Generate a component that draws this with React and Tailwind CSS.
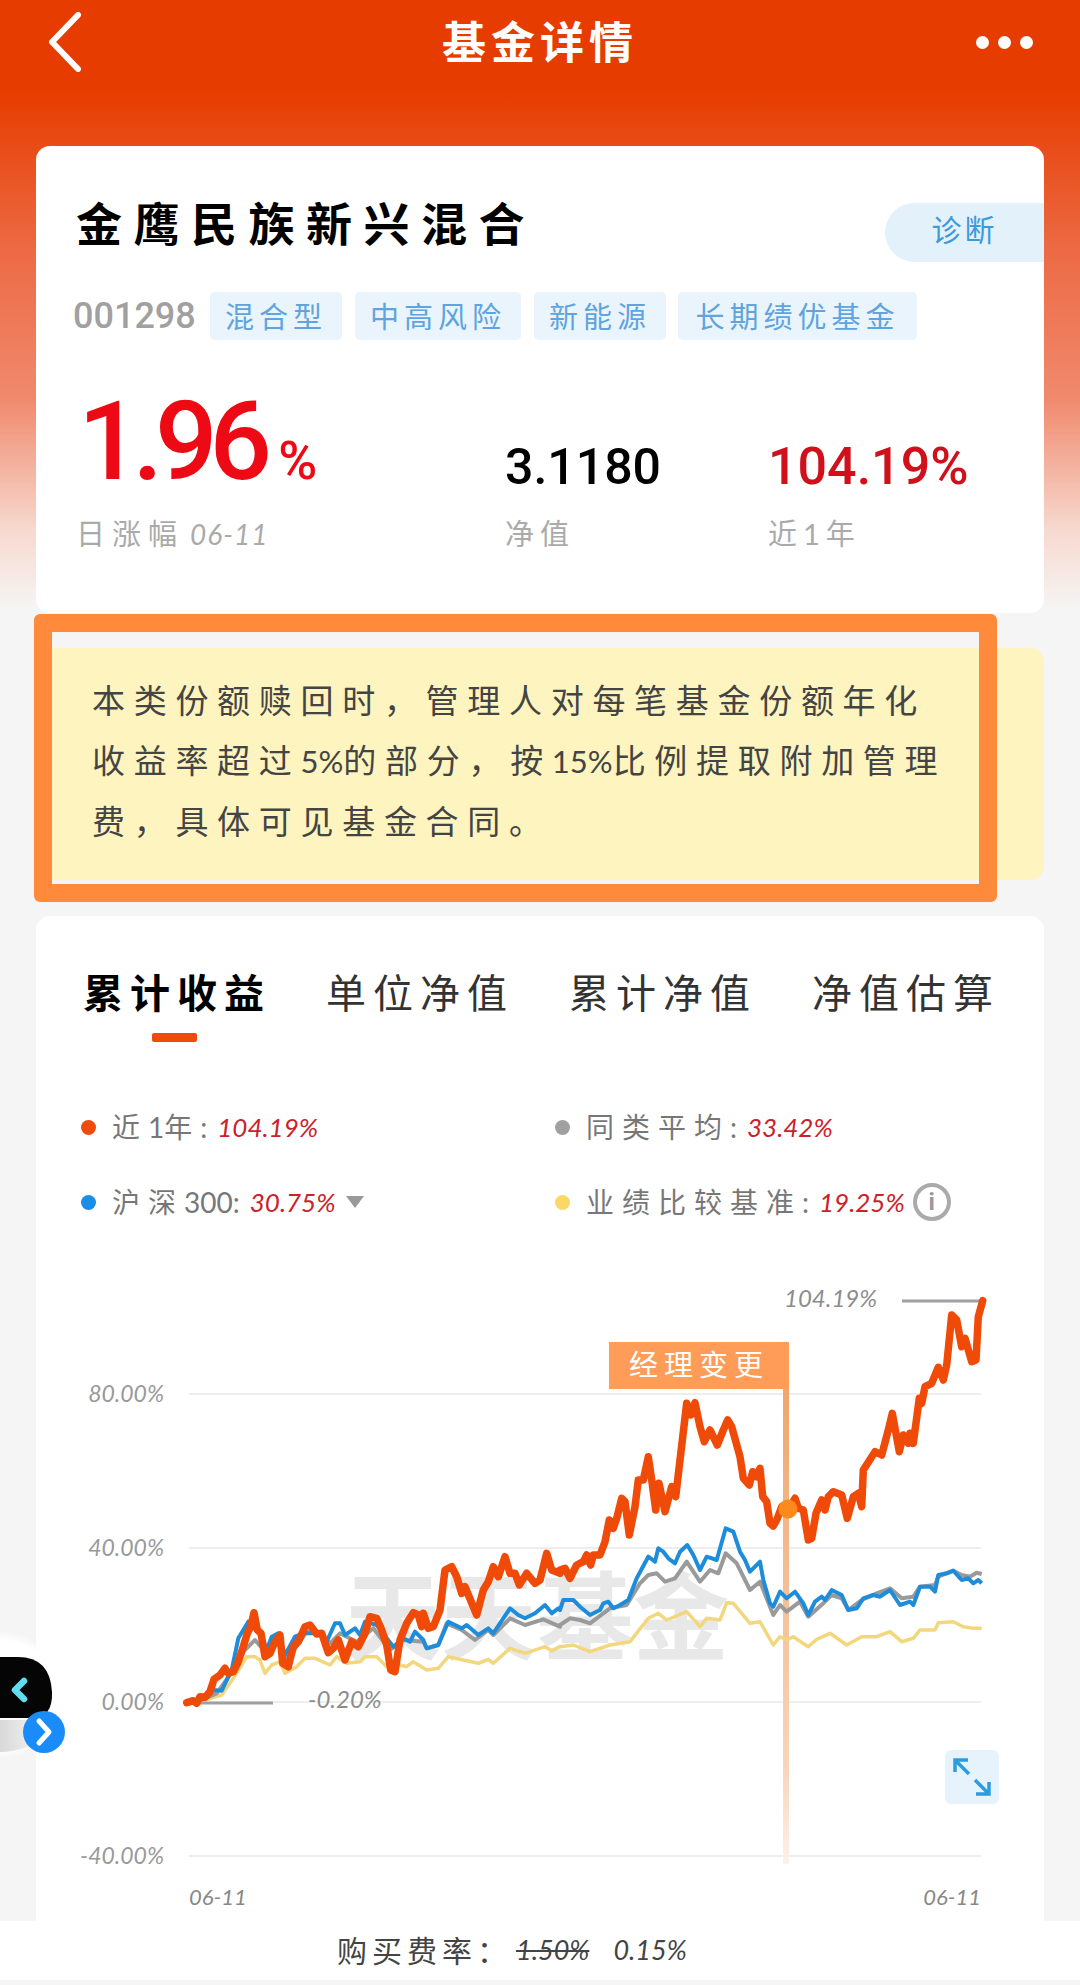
import React from "react";

const FONT_HAND = "font-['Lato','Noto_Sans_CJK_SC',sans-serif]";

// traced from the chart, left half then right half
const fromLeft = (pts) => pts.map(([x, y]) => [160 + x / 3, 1280 + y / 3]);
const fromRight = (pts) => pts.map(([x, y]) => [560 + x / 3, 1280 + y / 3]);
const toPoints = (l, r) => [...fromLeft(l), ...fromRight(r)].map(([x, y]) => `${x.toFixed(1)},${y.toFixed(1)}`).join(" ");

const orange = toPoints(
  [[80,1268],[100,1262],[110,1270],[120,1250],[135,1252],[150,1235],[162,1198],[180,1185],[195,1165],[205,1180],[220,1175],[235,1145],[248,1105],[262,1060],[272,1040],[282,998],[292,1050],[303,1060],[315,1130],[330,1120],[345,1085],[360,1065],[368,1150],[385,1160],[400,1100],[415,1085],[435,1040],[450,1035],[470,1062],[485,1060],[505,1118],[520,1105],[535,1080],[555,1140],[575,1085],[595,1100],[615,1060],[630,1010],[650,1015],[665,1050],[680,1095],[692,1170],[705,1175],[720,1080],[740,1030],[760,998],[775,1005],[785,1040],[790,1000],[805,1045],[820,1040],[840,990],[855,870],[875,860],[890,890],[905,940],[915,920],[950,1005],[970,930],[985,905],[1000,860],[1015,890],[1035,830],[1050,880],[1065,880],[1078,915],[1100,880],[1125,910],[1140,900],[1160,820],[1175,870],[1200,880]],
  [[0,870],[15,865],[30,895],[50,855],[70,845],[80,825],[92,855],[100,825],[120,825],[135,785],[148,720],[160,745],[170,715],[185,655],[195,665],[208,765],[225,680],[235,600],[250,600],[265,530],[275,600],[287,690],[297,610],[315,695],[335,620],[347,650],[360,540],[380,370],[392,405],[405,368],[420,440],[433,485],[450,450],[472,495],[490,450],[503,420],[515,440],[540,530],[550,595],[568,615],[578,575],[590,590],[600,565],[608,650],[620,665],[630,730],[640,738],[650,720],[665,680],[685,690],[705,655],[715,685],[730,690],[745,780],[755,775],[768,700],[785,660],[795,690],[805,650],[820,635],[845,645],[862,715],[880,650],[895,640],[905,680],[910,570],[945,515],[965,525],[985,450],[997,400],[1018,515],[1030,465],[1045,490],[1050,460],[1060,490],[1078,355],[1085,370],[1095,320],[1115,310],[1135,262],[1150,300],[1160,255],[1175,105],[1190,120],[1205,200],[1215,175],[1235,245],[1248,240],[1255,110],[1268,62]]
);

const blue = toPoints(
  [[100,1262],[130,1255],[160,1230],[185,1232],[215,1170],[235,1075],[265,1025],[280,1040],[300,1055],[320,1110],[335,1070],[355,1060],[375,1125],[405,1070],[430,1060],[480,1060],[500,1085],[525,1030],[540,1030],[555,1065],[585,1045],[600,1065],[615,1025],[650,1035],[680,1075],[700,1100],[730,1075],[750,1085],[765,1055],[790,1080],[800,1105],[835,1095],[865,1025],[905,1045],[920,1035],[955,1065],[985,1045],[1000,1060],[1030,1015],[1050,985],[1075,1005],[1095,1015],[1125,1000],[1155,975],[1175,1000],[1195,985],[1200,990]],
  [[0,990],[10,960],[40,960],[60,980],[90,1005],[120,990],[130,970],[145,965],[160,985],[180,975],[205,960],[230,895],[265,830],[285,845],[295,805],[310,815],[325,835],[345,850],[360,815],[382,795],[400,825],[420,870],[440,830],[470,840],[497,745],[520,755],[540,815],[555,840],[570,875],[585,860],[600,845],[610,900],[630,970],[640,980],[660,935],[680,955],[705,935],[730,970],[745,1005],[765,965],[785,950],[795,960],[815,930],[845,945],[865,990],[890,985],[910,955],[940,945],[960,950],[990,930],[1020,975],[1050,965],[1060,975],[1080,920],[1110,920],[1125,935],[1135,885],[1160,880],[1180,872],[1205,900],[1225,895],[1240,910],[1255,900],[1265,910]]
);

const gray = toPoints(
  [[100,1270],[170,1240],[220,1170],[250,1115],[285,1080],[320,1120],[350,1085],[385,1135],[440,1055],[480,1060],[510,1090],[540,1060],[590,1085],[640,1045],[690,1110],[730,1080],[790,1085],[800,1105],[835,1095],[860,1030],[905,1050],[945,1080],[985,1050],[1000,1065],[1050,1015],[1095,1035],[1150,1018],[1200,1040]],
  [[0,1035],[30,1015],[60,1020],[90,1030],[130,1000],[150,985],[200,975],[240,910],[265,885],[290,880],[315,905],[345,895],[380,845],[420,905],[450,870],[475,880],[497,820],[530,850],[570,930],[600,905],[640,1005],[660,975],[680,995],[720,965],[745,1010],[790,970],[815,945],[845,955],[865,990],[905,960],[950,940],[990,925],[1025,955],[1060,950],[1080,920],[1125,915],[1135,890],[1180,872],[1205,885],[1230,890],[1250,878],[1265,882]]
);

const yellow = toPoints(
  [[100,1270],[185,1245],[220,1195],[260,1130],[285,1130],[300,1140],[315,1180],[335,1155],[360,1145],[375,1180],[410,1160],[435,1135],[465,1135],[510,1155],[530,1130],[560,1150],[600,1145],[615,1130],[650,1130],[680,1160],[700,1165],[720,1155],[740,1160],[760,1145],[800,1170],[835,1165],[865,1130],[910,1140],[955,1150],[985,1138],[1000,1150],[1050,1105],[1095,1120],[1155,1100],[1175,1112],[1200,1100]],
  [[0,1100],[40,1095],[90,1115],[150,1095],[210,1085],[265,1015],[295,1000],[320,1020],[380,995],[420,1040],[440,1015],[480,1020],[500,968],[520,970],[570,1030],[600,1025],[640,1095],[660,1070],[680,1080],[700,1070],[745,1100],[770,1078],[810,1060],[860,1095],[905,1070],[950,1070],[990,1055],[1025,1085],[1060,1075],[1080,1050],[1125,1050],[1135,1028],[1180,1025],[1210,1040],[1240,1045],[1265,1045]]
);

function Tag({ children, className }) {
  return (
    <span className={`flex h-12 items-center justify-center rounded-[5px] bg-[#e9f4fc] text-[29px] tracking-[5px] text-[#5fa4de] ${className}`}>
      {children}
    </span>
  );
}

function Stat({ value, valueClass, label, width }) {
  return (
    <div className={`flex flex-col ${width}`}>
      <div className={`font-['Roboto',sans-serif] font-medium leading-[60px] ${valueClass}`}>{value}</div>
      <div className={`mt-[17px] text-[29px] leading-10 tracking-[6px] text-[#aaaaaa] ${FONT_HAND}`}>{label}</div>
    </div>
  );
}

function Num({ children }) {
  return <span className="tracking-normal">{children}</span>;
}

function LegendItem({ dot, label, value, children }) {
  return (
    <div className={`flex h-10 items-center text-[28px] text-[#777777] ${FONT_HAND}`}>
      <span className={`h-[15px] w-[15px] rounded-full ${dot}`} />
      <span className="ml-4 whitespace-nowrap tracking-[8px]">{label}</span>
      <span className="ml-[2px] text-[26px] italic text-[#cc2128]">{value}</span>
      {children}
    </div>
  );
}

function Chart() {
  const axis = [
    ["80.00%", 1394],
    ["40.00%", 1548],
    ["0.00%", 1702],
    ["-40.00%", 1856],
  ];
  return (
    <svg viewBox="36 1270 1008 651" width="1008" height="651" className={`mt-12 block ${FONT_HAND}`}>
      <defs>
        <linearGradient id="marker" x1="0" y1="0" x2="0" y2="1">
          <stop offset="0" stopColor="#f0a66c" />
          <stop offset="0.8" stopColor="#f8d5bb" />
          <stop offset="1" stopColor="#fdf1e8" />
        </linearGradient>
      </defs>
      <text x="345" y="1652" fontSize="96" fontWeight="700" fill="#e8e8e8">天天基金</text>
      {axis.map(([label, y]) => (
        <g key={label}>
          <line x1="189" x2="981" y1={y} y2={y} stroke="#eeeeee" strokeWidth="2" />
          <text x="164" y={y + 8} textAnchor="end" fontSize="23" fontStyle="italic" fill="#999999">{label}</text>
        </g>
      ))}
      <rect x="783" y="1389" width="6" height="475" fill="url(#marker)" />
      <polyline points={yellow} fill="none" stroke="#f3d77d" strokeWidth="3.5" strokeLinejoin="round" />
      <polyline points={gray} fill="none" stroke="#9a9a9a" strokeWidth="4" strokeLinejoin="round" />
      <polyline points={blue} fill="none" stroke="#1d8ddb" strokeWidth="4" strokeLinejoin="round" />
      <line x1="191" x2="273" y1="1703" y2="1703" stroke="#a0a0a0" strokeWidth="3" />
      <line x1="902" x2="981" y1="1301" y2="1301" stroke="#a0a0a0" strokeWidth="3" />
      <polyline points={orange} fill="none" stroke="#f04a08" strokeWidth="7.5" strokeLinejoin="round" strokeLinecap="round" />
      <circle cx="788" cy="1509" r="9.5" fill="#ff8a1c" />
      <rect x="609" y="1342" width="180" height="47" fill="#ff9c58" />
      <text x="699" y="1376" textAnchor="middle" fontSize="29" letterSpacing="6" fill="#ffffff">经理变更</text>
      <text x="784" y="1307" fontSize="24" fontStyle="italic" fill="#8c8c8c">104.19%</text>
      <text x="308" y="1708" fontSize="24" fontStyle="italic" fill="#8c8c8c">-0.20%</text>
      <text x="189" y="1905" fontSize="22" fontStyle="italic" fill="#888888">06-11</text>
      <text x="981" y="1905" textAnchor="end" fontSize="22" fontStyle="italic" fill="#888888">06-11</text>
      <rect x="945" y="1750" width="54" height="54" rx="6" fill="#e7f3fc" />
      <path d="M955 1772V1760H968M956 1761L969 1774M989 1782V1794H976M988 1793L975 1780" fill="none" stroke="#2a9de0" strokeWidth="3.5" />
    </svg>
  );
}

function Robot() {
  return (
    <div className="absolute left-0 top-[1630px] h-[130px] w-[70px]">
      <svg viewBox="0 0 70 130" width="70" height="130">
        <defs>
          <radialGradient id="halo" cx="0.5" cy="0.5" r="0.5">
            <stop offset="0.85" stopColor="#ffffff" />
            <stop offset="1" stopColor="#ffffff" stopOpacity="0" />
          </radialGradient>
          <linearGradient id="chin" x1="0" y1="0" x2="1" y2="0">
            <stop offset="0" stopColor="#d8d8d8" />
            <stop offset="1" stopColor="#f4f4f4" />
          </linearGradient>
        </defs>
        <ellipse cx="0" cy="65" rx="68" ry="64" fill="url(#halo)" />
        <path d="M0 90H40L30 116Q14 122 0 122Z" fill="url(#chin)" />
        <path d="M0 27H18Q50 27 52 62Q53 88 32 88H0Z" fill="#050505" />
        <path d="M24 51L15 60L24 69" fill="none" stroke="#63dcf2" strokeWidth="6.5" strokeLinecap="round" strokeLinejoin="round" />
        <circle cx="44" cy="102" r="21" fill="#1a8cfa" />
        <path d="M39 91L49 102L39 113" fill="none" stroke="#ffffff" strokeWidth="5" strokeLinecap="round" strokeLinejoin="round" />
      </svg>
    </div>
  );
}

export default function App() {
  return (
    <div className="relative h-[1985px] w-[1080px] overflow-hidden bg-[#f5f5f5] font-['Noto_Sans_CJK_SC',sans-serif]">
      <div className="bg-[linear-gradient(180deg,#e63c00_0,#e63c00_90px,#ec6a44_250px,#f08a6e_400px,#f7d9cf_530px,#f5f5f5_610px)] px-9">
        <header className="relative flex h-[84px] items-center justify-between">
          <svg width="34" height="60" viewBox="0 0 34 60" className="ml-3">
            <path d="M30 3L4 30L30 57" fill="none" stroke="#fff" strokeWidth="6" strokeLinecap="round" strokeLinejoin="round" />
          </svg>
          <h1 className="absolute left-[406px] -mt-1 text-[44px] font-bold tracking-[5px] text-white">基金详情</h1>
          <div className="mr-[11px] flex gap-[9px]">
            <span className="h-[13px] w-[13px] rounded-full bg-white" />
            <span className="h-[13px] w-[13px] rounded-full bg-white" />
            <span className="h-[13px] w-[13px] rounded-full bg-white" />
          </div>
        </header>

        <section className="mt-[62px] rounded-[14px] bg-white pb-[59px] pt-[57px]">
          <div className="flex items-start justify-between pl-10">
            <h2 className="text-[46px] font-bold leading-9 tracking-[11.5px] text-black">金鹰民族新兴混合</h2>
            <div className="flex h-[59px] w-[159px] items-center justify-center rounded-l-full bg-[#e3f1fb] pb-2 text-[30px] tracking-[3px] text-[#3c9bdc]">
              诊断
            </div>
          </div>

          <div className="mt-[30px] flex items-center pl-[37px]">
            <span className="w-[137px] font-['Roboto',sans-serif] text-[36px] font-medium leading-none text-[#a0a0a0]">001298</span>
            <Tag className="w-[132px]">混合型</Tag>
            <Tag className="ml-[13px] w-[166px]">中高风险</Tag>
            <Tag className="ml-[13px] w-[132px]">新能源</Tag>
            <Tag className="ml-3 w-[239px]">长期绩优基金</Tag>
          </div>

          <div className="mt-[49px] flex items-end pl-10">
            <div className="flex w-[429px] flex-col">
              <div className="mt-[3px] flex h-[100px] items-baseline font-['Roboto',sans-serif] font-medium leading-[100px] text-[#ee0a14]">
                <span className="ml-[2px] text-[110px] tracking-[-8px]">1.96</span>
                <span className="ml-[14px] text-[53px] tracking-[-2px]">%</span>
              </div>
              <div className={`mt-[22px] flex items-center text-[29px] leading-10 tracking-[7px] text-[#aaaaaa] ${FONT_HAND}`}>
                日涨幅
                <span className="ml-[6px] text-[28px] italic tracking-[1px]">06-11</span>
              </div>
            </div>
            <Stat width="w-[263px]" value="3.1180" valueClass="text-[50px] text-black" label="净值" />
            <Stat width="w-[240px]" value="104.19%" valueClass="text-[52px] text-[#d0111b]" label="近1年" />
          </div>
        </section>
      </div>

      <div className="px-9">
        <section className="relative mt-[35px] h-[232px] rounded-[14px] bg-[#fdf4bf] pl-14 pt-[22px] text-[33px] leading-[60px] tracking-[8.7px] text-[#444444]">
          <p className={`whitespace-nowrap ${FONT_HAND}`}>
            本类份额赎回时，管理人对每笔基金份额年化
            <br />
            收益率超过<span className="text-[31px] tracking-normal">5%</span>的部分，按<span className="text-[31px] tracking-normal">15%</span>比例提取附加管理
            <br />
            费，具体可见基金合同。
          </p>
          <div className="absolute -left-[2px] -top-[34px] h-[288px] w-[963px] rounded-[6px] border-[18px] border-[#ff8a3c]" />
        </section>

        <section className="mt-9 h-[1005px] rounded-t-[14px] bg-white pt-[47px]">
          <div className="flex gap-[55px] pl-[47px] text-[40px] leading-[56px] tracking-[7px] text-[#333333]">
            <span className="font-bold text-black">累计收益</span>
            <span>单位净值</span>
            <span>累计净值</span>
            <span>净值估算</span>
          </div>
          <div className="ml-[116px] mt-[14px] h-[9px] w-[45px] rounded-[2px] bg-[#f04a0e]" />

          <div className="mt-[65px] grid grid-cols-[474px_1fr] gap-y-[35px] pl-[45px]">
            <LegendItem dot="bg-[#f04a0e]" label={<>近<Num>1</Num>年:</>} value="104.19%" />
            <LegendItem dot="bg-[#a0a0a0]" label="同类平均:" value="33.42%" />
            <LegendItem dot="bg-[#1a8ee6]" label={<>沪深<Num>300</Num>:</>} value="30.75%">
              <span className="ml-[10px] h-0 w-0 border-x-[9px] border-t-[12px] border-x-transparent border-t-[#999999]" />
            </LegendItem>
            <LegendItem dot="bg-[#fbd768]" label="业绩比较基准:" value="19.25%">
              <span className="ml-[8px] flex h-[38px] w-[38px] items-center justify-center rounded-full border-4 border-[#aaaaaa] font-['Roboto',sans-serif] text-[24px] font-bold text-[#999999]">
                i
              </span>
            </LegendItem>
          </div>

          <Chart />
        </section>
      </div>

      <footer className={`absolute left-0 top-[1921px] flex h-[59px] w-full items-center bg-white pl-[337px] text-[30px] text-[#444444] ${FONT_HAND}`}>
        <span className="tracking-[5px]">购买费率：</span>
        <span className="ml-[4px] text-[27px] italic line-through">1.50%</span>
        <span className="ml-6 text-[27px] italic">0.15%</span>
      </footer>

      <Robot />
    </div>
  );
}
